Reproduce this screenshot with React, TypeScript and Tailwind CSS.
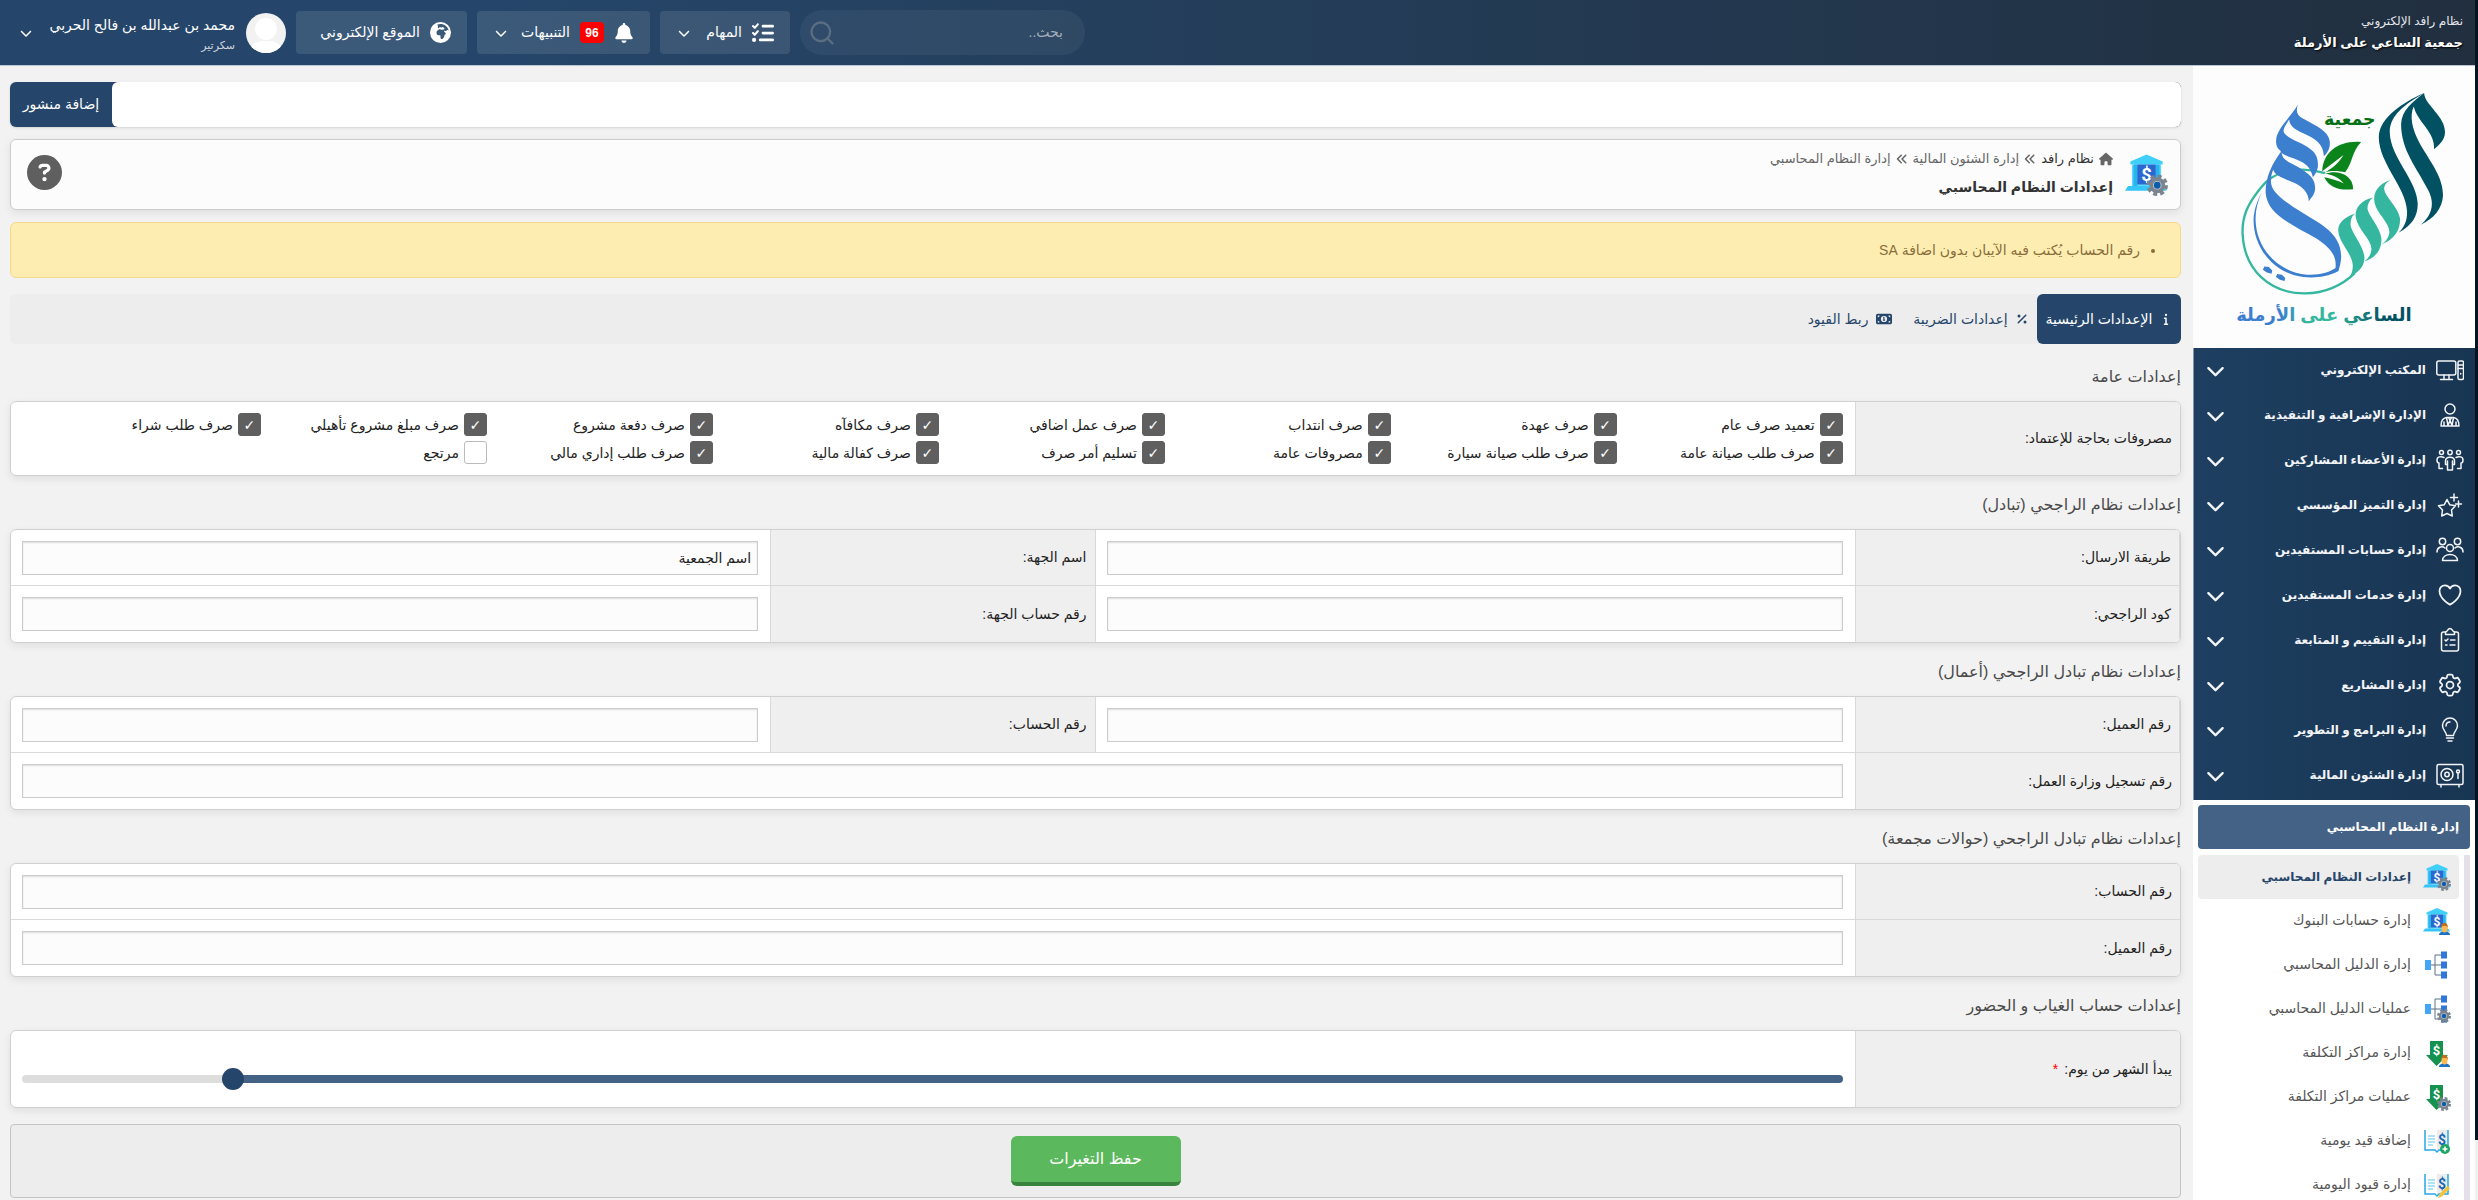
import React, {useState} from 'react';
import {
  FaAnglesLeft,
  FaBell,
  FaChevronDown,
  FaCircleQuestion,
  FaEarthAfrica,
  FaHouse,
  FaInfo,
  FaListCheck,
  FaMoneyBill1,
  FaPercent,
} from "react-icons/fa6";
import { HiOutlineCog6Tooth, HiOutlineHeart } from "react-icons/hi2";
import { Search } from "lucide-react";

type IconProps = { children: React.ReactNode; className?: string }

const Line = ({ children, className = "size-7" }: IconProps) => (
  <svg viewBox="0 0 28 28" className={className} fill="none" stroke="currentColor" strokeWidth="1.5" strokeLinecap="round" strokeLinejoin="round">
    {children}
  </svg>
)

const ComputerIcon = () => (
  <Line>
    <rect x="0.8" y="5" width="19" height="14" rx="2" />
    <path d="M8 19v3.5M13 19v3.5M4.500 23.500h12" />
    <rect x="22" y="5" width="5.500" height="18.500" rx="1.500" />
    <path d="M22 9h5.500M22 12.500h5.500M24.700 17.500v.5" />
  </Line>
)

const ManagerIcon = () => (
  <Line>
    <circle cx="14" cy="8" r="5" />
    <path d="M5 25c0-5 2-8 5.500-8.500h7C21 17 23 20 23 25zM10.500 16.500l1.500 8 2-5 2 5 1.500-8M12.500 16.500l1.500 3 1.500-3M8 21v4M20 21v4" />
  </Line>
)

const MembersIcon = () => (
  <Line>
    <circle cx="5.500" cy="6.500" r="2" />
    <circle cx="14" cy="6.500" r="2.200" />
    <circle cx="22.500" cy="6.500" r="2" />
    <path d="M8 11.500C5 10 1 10.500 1 14c0 2 .5 3 2 3v5.500h3.500M20 11.500c3-1.500 7-1 7 2.500 0 2-.5 3-2 3v5.500h-3.500" />
    <path d="M9.500 15c0-5 9-5 9 0v3.500h-2v5.500h-5v-5.500h-2zM11.500 15v4M16.500 15v4" />
  </Line>
)

const StarsIcon = () => (
  <Line>
    <path d="M11 8.500l2.800 5.300 5.700 1-4 4.200.8 6L11 22.500 5.700 25l.8-6-4-4.200 5.700-1z" />
    <path d="M18 3v7M14.500 6.500h7M22.500 10v6M19.500 13h6" />
  </Line>
)

const UsersIcon = () => (
  <Line>
    <circle cx="6.500" cy="5.500" r="3.200" />
    <circle cx="21.500" cy="5.500" r="3.200" />
    <circle cx="14" cy="12" r="3.500" />
    <path d="M1 16c0-5 5-6.500 8-4M27 16c0-5-5-6.500-8-4M6.500 24.500c0-8 15-8 15 0z" />
  </Line>
)

const ClipboardIcon = () => (
  <Line>
    <path d="M9.500 6H7.500a2 2 0 0 0-2 2v15a2 2 0 0 0 2 2h13a2 2 0 0 0 2-2V8a2 2 0 0 0-2-2h-2" />
    <path d="M9.500 8.500V6c2 0 2-3.500 4.500-3.500S16.500 6 18.500 6v2.500zM9 14l1 1 2-2M14.500 14h4.500M9.500 19h1.500M14 19h5" />
  </Line>
)

const BulbIcon = () => (
  <Line>
    <path d="M10.500 19.500c0-4-4-5-4-10a7.500 7.500 0 0 1 15 0c0 5-4 6-4 10zM10.500 22h7M12 25h4M10 10c0-2.500 1.500-4 4-4" />
  </Line>
)

const SafeIcon = () => (
  <Line>
    <rect x="1" y="3.500" width="26" height="20" rx="1.500" />
    <circle cx="11" cy="13.500" r="6" />
    <circle cx="11" cy="13.500" r="2.200" />
    <circle cx="22" cy="10.500" r="1.500" />
    <path d="M22 12v5.500M5 24v2M23 24v2" />
  </Line>
)

const GearBadge = () => (
  <g>
    <circle cx="21" cy="21" r="5.800" fill="none" stroke="#7b858f" strokeWidth="2.400" strokeDasharray="2.600 1.955" />
    <circle cx="21" cy="21" r="4" fill="#c5ccd3" stroke="#7b858f" strokeWidth="2.400" />
    <circle cx="21" cy="21" r="2.200" fill="#0b5cab" />
  </g>
)

const PersonBadge = () => (
  <g>
    <path d="M16 28c0-5 11-5 11 0z" fill="#1a73c4" />
    <ellipse cx="21.500" cy="21.500" rx="3" ry="4" fill="#ffb84d" />
    <path d="M18 21c0-7 7-7 7 0l-1.500-2h-4z" fill="#b8721f" />
  </g>
)

const BankIcon = ({ badge, className = "size-7" }: { badge: "gear" | "person", className?: string }) => (
  <svg viewBox="0 0 28 28" className={className}>
    <path d="M14 1L3.500 5.500v2h21v-2z" fill="#3fd0fa" />
    <path d="M4.500 7.500h19v14h-19z" fill="#5bd8ff" />
    <path d="M5.500 7.500h2.500v14H5.500zM20 7.500h2.500v14H20z" fill="#27b4ee" />
    <path d="M2 21.500h23l2 3H0z" fill="#36c5f7" />
    <rect x="8" y="7.500" width="12" height="13" fill="#2a68cf" />
    <text x="14" y="18.500" textAnchor="middle" fontSize="12" fontWeight="bold" fill="#fff" fontFamily="Roboto, sans-serif">$</text>
    {badge === "gear" ? <GearBadge /> : <PersonBadge />}
  </svg>
)

const TreeIcon = ({ gear }: { gear?: boolean }) => (
  <svg viewBox="0 0 28 28" className="size-7">
    <path d="M6 14h14M20 4h-8v20h8" fill="none" stroke="#5b7183" strokeWidth="1" />
    <rect x="2" y="9" width="6" height="10" fill="#42a5f5" />
    <path d="M18 .5h6v7h-6zM18 10.500h6v7h-6zM18 20.500h6v7h-6z" fill="#2d78d8" />
    {gear && <GearBadge />}
  </svg>
)

const CostIcon = ({ badge }: { badge: "gear" | "person" }) => (
  <svg viewBox="0 0 28 28" className="size-7">
    <path d="M7 2h13v14h5L13.500 27 3 16h4z" fill="#159150" />
    <text x="13.500" y="16" textAnchor="middle" fontSize="13" fontWeight="bold" fill="#fff" fontFamily="Roboto, sans-serif">$</text>
    {badge === "gear" ? <GearBadge /> : <PersonBadge />}
  </svg>
)

const JournalIcon = ({ edit }: { edit?: boolean }) => (
  <svg viewBox="0 0 28 28" className="size-7">
    <path d="M14 3h11v20H14z" fill="#ececec" />
    <path d="M2 3v20h10l2 2 2-2h9V3" fill="none" stroke="#2aa7e6" strokeWidth="1.500" />
    <path d="M5 9h7M5 12h7M5 15h7M5 18h5" stroke="#5ac8f2" strokeWidth="1.200" />
    <text x="19" y="18" textAnchor="middle" fontSize="14" fontWeight="bold" fill="#1767b3" fontFamily="Roboto, sans-serif">$</text>
    {edit ? (
      <path d="M15 27l1.500-4 8-8 2.500 2.500-8 8z" fill="#f3c33a" />
    ) : (
      <g>
        <circle cx="22" cy="22" r="5" fill="#1fa463" />
        <path d="M19.500 22h5M22 19.500v5" stroke="#fff" strokeWidth="1.500" />
      </g>
    )}
  </svg>
)

const Logo = () => (
  <svg viewBox="38 196 847 846" className="block w-full" role="img" aria-label="جمعية الساعي على الأرملة">
    <defs>
      <linearGradient id="logoText" x1="1" y1="0" x2="0" y2="0">
        <stop offset="0.150" stopColor="#025163" />
        <stop offset="0.450" stopColor="#35b79f" />
        <stop offset="0.600" stopColor="#35b79f" />
        <stop offset="0.750" stopColor="#3d7fcf" />
      </linearGradient>
    </defs>
    <g fill="#025163">
      <path d="M732 277C670 305 597 350 596 410C597 490 678 560 681 632C682 665 670 682 655 697C695 675 713 650 713 610C712 540 630 470 629 395C629 350 665 320 702 296Z" />
      <path d="M732 277C735 315 795 345 795 395C794 420 778 432 762 446C766 395 712 365 701 318C688 345 695 385 720 430C755 490 789 530 789 585C787 625 760 655 722 673C750 650 768 615 745 570C710 500 663 450 663 370C665 330 695 305 732 277Z" />
    </g>
    <g fill="#35b79f">
      <path d="M633 538C595 550 578 575 583 605C590 640 628 665 628 695C626 712 615 725 604 732C645 715 660 690 660 655C655 620 614 590 612 565C613 552 622 544 633 538Z" />
      <path d="M578 591C540 600 523 625 527 652C535 690 572 715 574 745C573 765 562 776 552 783C590 770 604 748 604 715C600 680 564 645 562 625C562 610 568 600 578 591Z" />
      <path d="M526 639C490 650 470 670 475 697C480 730 516 760 518 795C518 810 515 820 508 829C540 815 553 795 553 770C550 735 512 695 511 672C512 655 516 645 526 639Z" />
    </g>
    <path d="M434 518C370 497 285 505 243 560C200 612 185 650 187 700C192 810 270 880 375 879C430 878 480 860 524 818" fill="none" stroke="#35b79f" strokeWidth="7" />
    <g fill="#3d7fcf">
      <path d="M353 312C340 350 370 352 398 370C440 392 450 410 449 430C448 448 440 458 431 467C430 430 405 415 380 403C350 390 328 380 327 357C308 385 306 392 316 402C335 420 370 428 390 445C412 460 414 480 413 500C410 515 403 523 398 530C392 500 375 487 352 478C320 465 303 462 300 450C285 438 286 420 290 405C300 375 335 345 353 312Z" />
      <path d="M305 450C300 478 330 485 360 503C400 527 405 545 405 565C403 585 392 592 386 603C385 575 365 556 338 545C305 532 284 525 279 508C268 535 270 555 283 572C310 605 360 633 410 663C470 700 483 735 483 770C482 790 478 800 475 812C440 831 400 833 370 830C280 820 218 740 220 655C222 620 235 595 244 575C232 605 225 630 226 660C228 740 290 815 380 823C420 825 450 815 466 803C470 770 455 745 410 715C330 670 260 640 256 575C256 530 275 490 305 450Z" />
      <path d="M252 798l14 2 10 10-2 10-14-4-12-8zM291 821l14 2 10 10-2 9-14-4-12-8z" />
    </g>
    <g fill="#0a841b">
      <path d="M543 424C475 418 428 455 426 512L490 463C475 488 455 504 434 516C455 508 480 512 495 515C520 482 512 458 543 424Z" />
      <path d="M434 520C475 505 520 525 519 566C480 571 448 562 432 530C455 535 475 540 491 549C475 530 455 522 434 520Z" />
    </g>
    <text x="509" y="372" textAnchor="middle" fontSize="52" fontWeight="bold" fill="#056f13">جمعية</text>
    <text x="431" y="962" textAnchor="middle" fontSize="54" fontWeight="bold" fill="url(#logoText)">الساعي على الأرملة</text>
  </svg>
)

const menu = [
  { title: "المكتب الإلكتروني", icon: <ComputerIcon /> },
  { title: "الإدارة الإشرافية و التنفيذية", icon: <ManagerIcon /> },
  { title: "إدارة الأعضاء المشاركين", icon: <MembersIcon /> },
  { title: "إدارة التميز المؤسسي", icon: <StarsIcon /> },
  { title: "إدارة حسابات المستفيدين", icon: <UsersIcon /> },
  { title: "إدارة خدمات المستفيدين", icon: <HiOutlineHeart className="size-7" /> },
  { title: "إدارة التقييم و المتابعة", icon: <ClipboardIcon /> },
  { title: "إدارة المشاريع", icon: <HiOutlineCog6Tooth className="size-7" /> },
  { title: "إدارة البرامج و التطوير", icon: <BulbIcon /> },
  { title: "إدارة الشئون المالية", icon: <SafeIcon /> },
]

const subMenu = [
  { title: "إعدادات النظام المحاسبي", icon: <BankIcon badge="gear" /> },
  { title: "إدارة حسابات البنوك", icon: <BankIcon badge="person" /> },
  { title: "إدارة الدليل المحاسبي", icon: <TreeIcon /> },
  { title: "عمليات الدليل المحاسبي", icon: <TreeIcon gear /> },
  { title: "إدارة مراكز التكلفة", icon: <CostIcon badge="person" /> },
  { title: "عمليات مراكز التكلفة", icon: <CostIcon badge="gear" /> },
  { title: "إضافة قيد يومية", icon: <JournalIcon /> },
  { title: "إدارة قيود اليومية", icon: <JournalIcon edit /> },
]

const expenses = [
  "تعميد صرف عام",
  "صرف عهدة",
  "صرف انتداب",
  "صرف عمل اضافي",
  "صرف مكافآه",
  "صرف دفعة مشروع",
  "صرف مبلغ مشروع تأهيلي",
  "صرف طلب شراء",
  "صرف طلب صيانة عامة",
  "صرف طلب صيانة سيارة",
  "مصروفات عامة",
  "تسليم أمر صرف",
  "صرف كفالة مالية",
  "صرف طلب إداري مالي",
  "مرتجع",
]

const Header = () => (
  <header className="flex h-[66px] shrink-0 items-center justify-between border-b border-[#b9c6d3] bg-linear-to-r from-[#25466a] from-20% to-[#212f3f] ps-3 pe-5 text-white">
    <div>
      <p className="text-[12px] leading-5 text-gray-200">نظام رافد الإلكتروني</p>
      <p className="text-[13px] leading-6 font-bold [text-shadow:1px_1px_2px_#000]">جمعية الساعي على الأرملة</p>
    </div>
    <div className="flex items-center gap-[10px]">
      <form className="flex h-[45px] w-[285px] items-center rounded-full bg-white/5 ps-[22px] pe-2">
        <input type="search" aria-label="بحث" placeholder="بحث.." className="min-w-0 grow bg-transparent text-[14px] outline-none placeholder:text-[#a3adb8]" />
        <Search className="size-7 text-[#5b6d80]" />
      </form>
      <button className="flex h-[43px] w-[130px] items-center rounded-sm bg-white/10 ps-4 pe-[18px]">
        <FaListCheck className="size-[22px]" />
        <span className="ms-2.5 grow text-start text-[14px]">المهام</span>
        <FaChevronDown className="size-3" />
      </button>
      <button className="flex h-[43px] w-[173px] items-center rounded-sm bg-white/10 ps-4 pe-[18px]">
        <FaBell className="size-5" />
        <span className="ms-2.5 flex h-[21px] w-6 items-center justify-center rounded-sm bg-[#f00] text-[12px] font-bold">96</span>
        <span className="ms-2.5 grow text-start text-[14px]">التنبيهات</span>
        <FaChevronDown className="size-3" />
      </button>
      <a href="#" className="flex h-[43px] w-[171px] items-center gap-2.5 rounded-sm bg-white/10 px-4">
        <FaEarthAfrica className="size-[21px]" />
        <span className="text-[14px]">الموقع الإلكتروني</span>
      </a>
      <button className="flex items-center text-start">
        <svg viewBox="0 0 40 40" className="size-10 rounded-full bg-[#f2f2f2]">
          <ellipse cx="20" cy="16" rx="11" ry="11" fill="#fff" />
          <path d="M3 40C5 28 14 28 20 28s15 0 17 12z" fill="#fff" />
        </svg>
        <span className="ms-[11px] block w-[203px]">
          <span className="block text-[14px] leading-6">محمد بن عبدالله بن فالح الحربي</span>
          <span className="block text-[11px] leading-4 text-gray-300">سكرتير</span>
        </span>
        <FaChevronDown className="size-3" />
      </button>
    </div>
  </header>
)

const Sidebar = () => (
  <aside className="flex w-[282px] shrink-0 flex-col overflow-hidden bg-white">
    <div className="bg-[#fdfdfd]">
      <Logo />
    </div>
    <nav className="border-e border-[#8595a6] bg-linear-to-l from-[#183552] to-[#1e3f61] pb-0.5 text-gray-100">
      {menu.map(({ title, icon }) => (
        <button key={title} className="flex h-[45px] w-full items-center ps-[11px] pe-3">
          {icon}
          <span className="ms-[10px] grow text-start text-[12px] font-bold whitespace-nowrap">{title}</span>
          <FaChevronDown className="size-[19px]" />
        </button>
      ))}
    </nav>
    <div className="px-[5px] pt-[5px]">
      <h2 className="flex h-11 items-center rounded-sm bg-[#446285] px-[11px] text-[12px] font-bold text-white">إدارة النظام المحاسبي</h2>
      <div className="mt-1.5 flex">
        <div className="w-[6px] bg-[#e4dfe8]" />
        <ul className="ms-[5px] grow">
          {subMenu.map(({ title, icon }, i) => (
            <li key={title}>
              <a href="#" className={i === 0
                ? "flex h-11 items-center gap-3 rounded-sm bg-[#ededed] px-2 text-[12px] font-bold text-[#25466a]"
                : "flex h-11 items-center gap-3 px-2 text-[14px] text-[#555]"}>
                {icon}
                {title}
              </a>
            </li>
          ))}
        </ul>
      </div>
    </div>
  </aside>
)

const SectionTitle = ({ children }: { children: React.ReactNode }) => (
  <h2 className="flex h-[53px] items-center pt-1 text-[16px] text-[#4a4a4a]">{children}</h2>
)

const Panel = ({ children }: { children: React.ReactNode }) => (
  <div className="divide-y divide-[#d9d9d9] overflow-hidden rounded-md border border-[#d0d0d0] bg-white shadow-[0_3px_8px_#00000014]">{children}</div>
)

type FieldProps = { id: string; label: string; value?: string; wide?: boolean }

const Field = ({ id, label, value, wide }: FieldProps) => (
  <div className={wide ? "flex w-full" : "flex w-1/2"}>
    <label
      htmlFor={id}
      className={wide
        ? "flex w-[15%] items-center border-e border-[#d9d9d9] bg-[#efefef] px-2 text-[14px] text-[#222]"
        : "flex w-[30%] items-center border-x border-[#d9d9d9] bg-[#efefef] px-2 text-[14px] text-[#222]"}
    >
      {label}
    </label>
    <div className="flex grow items-center ps-3 pe-[11px]">
      <input
        id={id}
        type="text"
        defaultValue={value}
        className="h-[34px] w-full border border-[#ccc] bg-[#fcfcfc] px-1.5 text-[14px] text-[#222] shadow-[inset_0_1px_2px_#ddd] outline-none"
      />
    </div>
  </div>
)

const FieldRow = ({ children }: { children: React.ReactNode }) => (
  <div className="flex h-14">{children}</div>
)

const DayRange = () => {
  const [day, setDay] = useState(25)
  const filled = ((day - 1) / 27) * 100

  return (
    <input
      id="month-start"
      type="range"
      min={1}
      max={28}
      value={day}
      onChange={ev => setDay(Number(ev.target.value))}
      style={{ background: `linear-gradient(to left, #446285 ${filled}%, #ddd ${filled}%)` }}
      className="h-2 w-full appearance-none rounded-full [&::-webkit-slider-thumb]:size-[22px] [&::-webkit-slider-thumb]:appearance-none [&::-webkit-slider-thumb]:rounded-full [&::-webkit-slider-thumb]:bg-[#25466a]"
    />
  )
}

const Main = () => (
  <main className="min-w-0 grow overflow-y-auto bg-[#f2f2f2] ps-3 pe-[10px] pt-4 [scrollbar-width:none]">
    <div className="flex h-[45px] overflow-hidden rounded-md bg-[#25466a] shadow-sm">
      <input type="text" aria-label="منشور جديد" className="min-w-0 grow rounded-e-md bg-white px-3 text-[14px] outline-none" />
      <button className="w-[102px] text-[14px] text-white">إضافة منشور</button>
    </div>

    <div className="mt-3 flex h-[71px] items-center rounded-md border border-[#ccc] bg-[#fcfcfc] ps-3 pe-4 shadow-[0_3px_8px_#00000014]">
      <BankIcon badge="gear" className="size-[43px]" />
      <div className="ms-3 grow">
        <nav className="flex items-center gap-[5px] text-[13px] leading-6 text-[#666]">
          <FaHouse className="size-[14px]" />
          <a href="#" className="text-[#333]">نظام رافد</a>
          <FaAnglesLeft className="size-3" />
          <a href="#">إدارة الشئون المالية</a>
          <FaAnglesLeft className="size-3" />
          <a href="#">إدارة النظام المحاسبي</a>
        </nav>
        <h1 className="text-[14px] leading-8 font-bold text-[#333]">إعدادات النظام المحاسبي</h1>
      </div>
      <button aria-label="مساعدة" className="pb-1">
        <FaCircleQuestion className="size-[35px] text-[#5f5f5f]" />
      </button>
    </div>

    <ul className="mt-3 flex h-[56px] items-center rounded-md border border-[#f5d98b] bg-[#fdedb1] ps-10 text-[14px] text-[#8a6d3b]">
      <li className="list-item list-disc">رقم الحساب يُكتب فيه الآيبان بدون اضافة SA</li>
    </ul>

    <div role="tablist" className="mt-4 flex h-[50px] rounded-md bg-[#ededed] text-[14px] text-[#25466a]">
      <button role="tab" aria-selected="true" className="flex w-[144px] items-center justify-center gap-2 rounded-md bg-[#25466a] text-white">
        <FaInfo className="size-3" />
        الإعدادات الرئيسية
      </button>
      <button role="tab" aria-selected="false" className="flex w-[133px] items-center justify-center gap-2">
        <FaPercent className="size-3" />
        إعدادات الضريبة
      </button>
      <button role="tab" aria-selected="false" className="flex w-[108px] items-center justify-center gap-2">
        <FaMoneyBill1 className="size-4" />
        ربط القيود
      </button>
    </div>

    <form>
      <div className="pt-1">
        <SectionTitle>إعدادات عامة</SectionTitle>
      </div>
      <Panel>
        <fieldset className="flex">
          <div className="flex w-[15%] items-center border-e border-[#d9d9d9] bg-[#efefef] px-2 text-[14px] text-[#222]">
            مصروفات بحاجة للإعتماد:
          </div>
          <div className="grid grow grid-cols-8 gap-y-[5px] py-[11px] ps-3 pe-6">
            {expenses.map((item) => (
              <label key={item} className="flex items-center gap-[5px] text-[14px] leading-5 whitespace-nowrap text-[#222]">
                <input
                  type="checkbox"
                  defaultChecked={item !== "مرتجع"}
                  className="grid size-[23px] shrink-0 appearance-none place-content-center rounded-[3px] border border-[#bbb] bg-white text-[14px] leading-none text-white checked:border-[#5f5f5f] checked:bg-[#5f5f5f] checked:before:content-['✓']"
                />
                {item}
              </label>
            ))}
          </div>
        </fieldset>
      </Panel>

      <SectionTitle>إعدادات نظام الراجحي (تبادل)</SectionTitle>
      <Panel>
        <FieldRow>
          <Field id="send-method" label="طريقة الارسال:" />
          <Field id="org-name" label="اسم الجهة:" value="اسم الجمعية" />
        </FieldRow>
        <FieldRow>
          <Field id="rajhi-code" label="كود الراجحي:" />
          <Field id="org-account" label="رقم حساب الجهة:" />
        </FieldRow>
      </Panel>

      <SectionTitle>إعدادات نظام تبادل الراجحي (أعمال)</SectionTitle>
      <Panel>
        <FieldRow>
          <Field id="client-number" label="رقم العميل:" />
          <Field id="account-number" label="رقم الحساب:" />
        </FieldRow>
        <FieldRow>
          <Field id="labor-number" label="رقم تسجيل وزارة العمل:" wide />
        </FieldRow>
      </Panel>

      <SectionTitle>إعدادات نظام تبادل الراجحي (حوالات مجمعة)</SectionTitle>
      <Panel>
        <FieldRow>
          <Field id="bulk-account" label="رقم الحساب:" wide />
        </FieldRow>
        <FieldRow>
          <Field id="bulk-client" label="رقم العميل:" wide />
        </FieldRow>
      </Panel>

      <SectionTitle>إعدادات حساب الغياب و الحضور</SectionTitle>
      <Panel>
        <div className="flex h-[76px]">
          <label htmlFor="month-start" className="flex w-[15%] items-center gap-1.5 border-e border-[#d9d9d9] bg-[#efefef] px-2 text-[14px] text-[#222]">
            يبدأ الشهر من يوم: <span className="text-[#f00]">*</span>
          </label>
          <div className="flex grow items-center ps-3 pe-[11px] pt-5">
            <DayRange />
          </div>
        </div>
      </Panel>

      <div className="mt-4 flex h-[74px] items-center justify-center rounded-sm border border-[#c4c4c4] bg-[#ededed]">
        <button type="submit" className="h-[50px] w-[170px] rounded-md border-b-4 border-[#39843c] bg-[#5cb85c] text-[16px] text-white">
          حفظ التغيرات
        </button>
      </div>
    </form>
  </main>
)

const App = () => {
  return (
    <div dir="rtl" className="flex h-screen bg-[#f2f2f2] font-['Liberation_Sans','DejaVu_Sans',sans-serif]">
      <div className="w-[3px] shrink-0 bg-[#f1f1f1]">
        <div className="h-[95%] bg-[#031422]" />
      </div>
      <div className="flex min-w-0 grow flex-col">
        <Header />
        <div className="flex min-h-0 grow">
          <Sidebar />
          <Main />
        </div>
      </div>
    </div>
  );
};

export default App;
